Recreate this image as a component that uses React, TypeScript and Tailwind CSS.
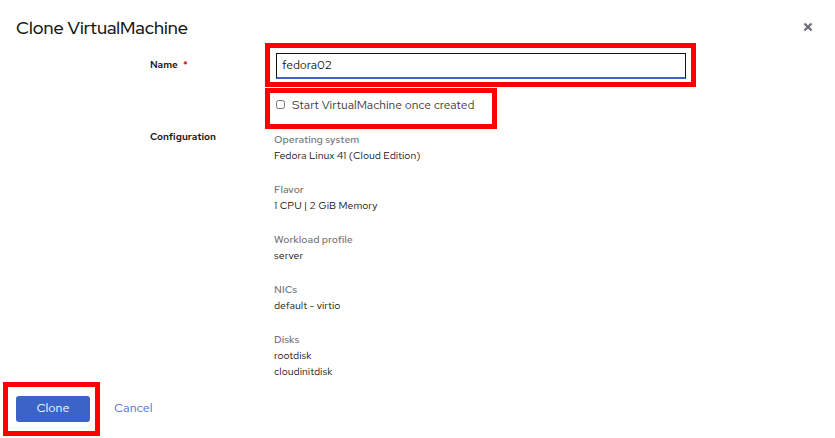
import React, { useState } from "react";

const config = [
  { label: "Operating system", values: ["Fedora Linux 41 (Cloud Edition)"] },
  { label: "Flavor", values: ["1 CPU | 2 GiB Memory"] },
  { label: "Workload profile", values: ["server"] },
  { label: "NICs", values: ["default - virtio"] },
  { label: "Disks", values: ["rootdisk", "cloudinitdisk"] },
];

export default function App() {
  const [name, setName] = useState("fedora02");
  const [start, setStart] = useState(false);

  return (
    <div
      className="relative w-[835px] h-[438px] bg-white text-[#151515] overflow-hidden"
      style={{ fontFamily: '"Red Hat Text", Lato, "Open Sans", sans-serif' }}
    >
      {/* header */}
      <div className="flex items-start justify-between pl-4 pr-[22px] pt-[16px]">
        <h1
          className="text-[18px] leading-[24px] font-medium"
          style={{ fontFamily: '"Red Hat Display", Lato, sans-serif' }}
        >
          Clone VirtualMachine
        </h1>
        <button className="mt-[6px] text-[#6a6e73]">
          <svg width="10" height="10" viewBox="0 0 10 10">
            <path d="M1.5 1.5 L8.5 8.5 M8.5 1.5 L1.5 8.5" stroke="currentColor" strokeWidth="2.2" />
          </svg>
        </button>
      </div>

      {/* form */}
      <div className="mt-[12px] grid grid-cols-[124px_1fr] pl-[150px] pr-[150px]">
        <label className="text-[10px] font-semibold leading-[26px]">
          Name <span className="text-[#c9190b] ml-[3px]">*</span>
        </label>
        <div className="pl-[2px]">
          <input
            value={name}
            onChange={(e) => setName(e.target.value)}
            className="w-[410px] h-[26px] border border-[#151515] border-b-2 border-b-[#3e63c4] px-[5px] text-[12px] outline-none"
          />
        </div>

        <div />
        <label className="flex items-center gap-[7px] pl-[2px] mt-[17px] text-[12px] text-[#3a3a3a]">
          <input
            type="checkbox"
            checked={start}
            onChange={(e) => setStart(e.target.checked)}
            className="w-[9px] h-[9px] accent-[#3e63c4]"
          />
          Start VirtualMachine once created
        </label>

        <div className="text-[10px] font-semibold mt-[15px]">Configuration</div>
        <div className="mt-[17px] flex flex-col gap-[18px]">
          {config.map((c) => (
            <div key={c.label} className="flex flex-col">
              <span className="text-[10.5px] leading-[16px] font-medium text-[#72767b]">{c.label}</span>
              {c.values.map((v) => (
                <span key={v} className="text-[10.5px] leading-[16px] text-[#151515]">
                  {v}
                </span>
              ))}
            </div>
          ))}
        </div>
      </div>

      {/* footer */}
      <div className="flex items-center gap-[24px] pl-4 mt-[17px]">
        <button className="w-[74px] h-[26px] rounded-[3px] bg-[#3c63c7] text-white text-[12.5px]">
          Clone
        </button>
        <button className="text-[12.5px] text-[#4a6fcf]">Cancel</button>
      </div>

      {/* red annotation boxes */}
      <div className="absolute left-[265px] top-[43px] w-[431px] h-[44px] border-[5px] border-[#ff0000] pointer-events-none" />
      <div className="absolute left-[265px] top-[88px] w-[232px] h-[41px] border-[5px] border-[#ff0000] pointer-events-none" />
      <div className="absolute left-[3px] top-[382px] w-[97px] h-[54px] border-[5px] border-[#ff0000] pointer-events-none" />
    </div>
  );
}
